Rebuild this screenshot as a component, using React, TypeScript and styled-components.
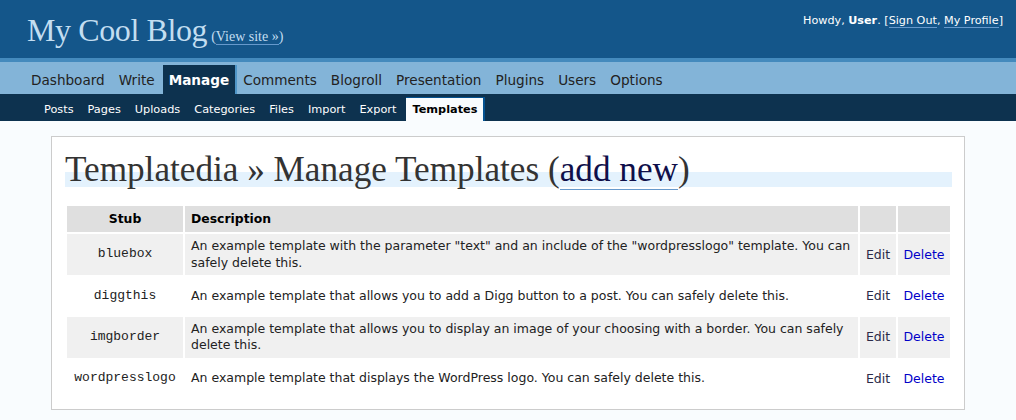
import React from "react";
import styled, { createGlobalStyle } from "styled-components";

const GlobalStyle = createGlobalStyle`
  html, body {
    margin: 0;
    padding: 0;
    background: #f9fcfe;
    font-family: "DejaVu Sans", Verdana, sans-serif;
    color: #333;
  }
`;

const Head = styled.div`
  height: 58px;
  box-sizing: border-box;
  background: #14568a;
  display: flex;
  justify-content: space-between;
  align-items: flex-start;
  padding: 0 13px 0 27px;
`;

const BlogName = styled.h1`
  margin: 0;
  padding-top: 14px;
  font: normal 32px/32px "Liberation Serif", Georgia, serif;
  color: #c3def1;
  letter-spacing: -0.4px;
`;

const ViewSite = styled.span`
  font-size: 14px;
  letter-spacing: 0;
  margin-left: 4px;
  a {
    color: #c3def1;
    text-decoration: none;
    border-bottom: 1px solid #69c;
  }
`;

const UserInfo = styled.div`
  padding-top: 14px;
  font-size: 11.2px;
  color: #fff;
  b {
    font-weight: bold;
  }
  a {
    color: #fff;
    text-decoration: none;
    border-bottom: 1px solid #69c;
  }
`;

const AdminMenu = styled.ul`
  margin: 0;
  list-style: none;
  background: #83b4d8;
  border-top: 4px solid #448abd;
  height: 36px;
  box-sizing: border-box;
  padding: 3px 0 0 25px;
  display: flex;
  align-items: stretch;
`;

const MenuItem = styled.li`
  display: flex;
`;

const MenuLink = styled.a<{ $current?: boolean }>`
  display: flex;
  align-items: center;
  padding: 1px 6px 0 6px;
  font-size: 13.6px;
  text-decoration: none;
  color: ${(p) => (p.$current ? "#fff" : "#222")};
  font-weight: ${(p) => (p.$current ? "bold" : "normal")};
  background: ${(p) => (p.$current ? "#0d324f" : "transparent")};
  border-right: 2px solid ${(p) => (p.$current ? "#4f96c8" : "transparent")};
`;

const SubMenu = styled.ul`
  margin: 0;
  list-style: none;
  background: #0d324f;
  height: 27px;
  box-sizing: border-box;
  padding: 3px 0 0 38px;
  display: flex;
  align-items: stretch;
`;

const SubLink = styled.a<{ $current?: boolean }>`
  display: flex;
  align-items: center;
  padding: 0 6px;
  font-size: 11.3px;
  text-decoration: none;
  font-weight: ${(p) => (p.$current ? "bold" : "normal")};
  color: ${(p) => (p.$current ? "#000" : "#fff")};
  background: ${(p) => (p.$current ? "#f9fcfe" : "transparent")};
  border-top: 1px solid ${(p) => (p.$current ? "#045290" : "transparent")};
  border-right: 2px solid ${(p) => (p.$current ? "#045290" : "transparent")};
  margin-left: ${(p) => (p.$current ? "2px" : "0")};
`;

const Wrap = styled.div`
  margin: 15px 51px 0 51px;
  background: #fff;
  border: 1px solid #ccc;
  padding: 15px 12px 10px 13px;
`;

const Title = styled.h2`
  margin: 0;
  font: normal 35.2px/36px "Liberation Serif", Georgia, serif;
  color: #333;
  background: linear-gradient(
    to bottom,
    transparent 20px,
    #e4f2fd 20px,
    #e4f2fd 35px,
    transparent 35px
  );
  a {
    color: #0f0f4a;
    text-decoration: none;
    border-bottom: 1px solid #69c;
  }
`;

const Table = styled.table`
  width: 100%;
  margin-top: 16px;
  border-spacing: 2px;
  font-size: 12.5px;
  line-height: 16.5px;
`;

const Th = styled.th<{ $align?: string; $width?: number }>`
  background: #dfdfdf;
  height: 26px;
  padding: 0 6px;
  font-size: 12.4px;
  font-weight: bold;
  color: #000;
  text-align: ${(p) => p.$align || "left"};
  width: ${(p) => (p.$width ? `${p.$width}px` : "auto")};
  box-sizing: border-box;
`;

const Row = styled.tr<{ $alt: boolean }>`
  background: ${(p) => (p.$alt ? "#f0f0f0" : "#fff")};
`;

const StubCell = styled.td`
  padding: 4px 6px;
  text-align: center;
  font-family: "Liberation Mono", "Courier New", monospace;
  font-size: 13px;
  color: #222;
`;

const DescCell = styled.td`
  padding: 4px 6px;
  color: #222;
`;

const ActionCell = styled.td`
  padding: 4px 0;
`;

const Action = styled.a<{ $danger?: boolean }>`
  display: block;
  padding: 7px 0 6px;
  text-align: center;
  text-decoration: none;
  color: ${(p) => (p.$danger ? "#0000c8" : "#2a2a48")};
`;

const menu = ["Dashboard", "Write", "Manage", "Comments", "Blogroll", "Presentation", "Plugins", "Users", "Options"];
const submenu = ["Posts", "Pages", "Uploads", "Categories", "Files", "Import", "Export", "Templates"];

const templates = [
  {
    stub: "bluebox",
    desc: 'An example template with the parameter "text" and an include of the "wordpresslogo" template. You can safely delete this.',
  },
  {
    stub: "diggthis",
    desc: "An example template that allows you to add a Digg button to a post. You can safely delete this.",
  },
  {
    stub: "imgborder",
    desc: "An example template that allows you to display an image of your choosing with a border. You can safely delete this.",
  },
  {
    stub: "wordpresslogo",
    desc: "An example template that displays the WordPress logo. You can safely delete this.",
  },
];

export default function App() {
  return (
    <>
      <GlobalStyle />
      <Head>
        <BlogName>
          My Cool Blog
          <ViewSite>
            (<a href="#">View site »</a>)
          </ViewSite>
        </BlogName>
        <UserInfo>
          Howdy, <b>User</b>. [<a href="#">Sign Out</a>, <a href="#">My Profile</a>]
        </UserInfo>
      </Head>
      <AdminMenu>
        {menu.map((m) => (
          <MenuItem key={m}>
            <MenuLink href="#" $current={m === "Manage"}>
              {m}
            </MenuLink>
          </MenuItem>
        ))}
      </AdminMenu>
      <SubMenu>
        {submenu.map((m) => (
          <MenuItem key={m}>
            <SubLink href="#" $current={m === "Templates"}>
              {m}
            </SubLink>
          </MenuItem>
        ))}
      </SubMenu>
      <Wrap>
        <Title>
          Templatedia » Manage Templates (<a href="#">add new</a>)
        </Title>
        <Table>
          <thead>
            <tr>
              <Th $align="center" $width={116}>
                Stub
              </Th>
              <Th>Description</Th>
              <Th $width={36}></Th>
              <Th $width={52}></Th>
            </tr>
          </thead>
          <tbody>
            {templates.map((t, i) => (
              <Row key={t.stub} $alt={i % 2 === 0}>
                <StubCell>{t.stub}</StubCell>
                <DescCell>{t.desc}</DescCell>
                <ActionCell>
                  <Action href="#">Edit</Action>
                </ActionCell>
                <ActionCell>
                  <Action href="#" $danger>
                    Delete
                  </Action>
                </ActionCell>
              </Row>
            ))}
          </tbody>
        </Table>
      </Wrap>
    </>
  );
}
